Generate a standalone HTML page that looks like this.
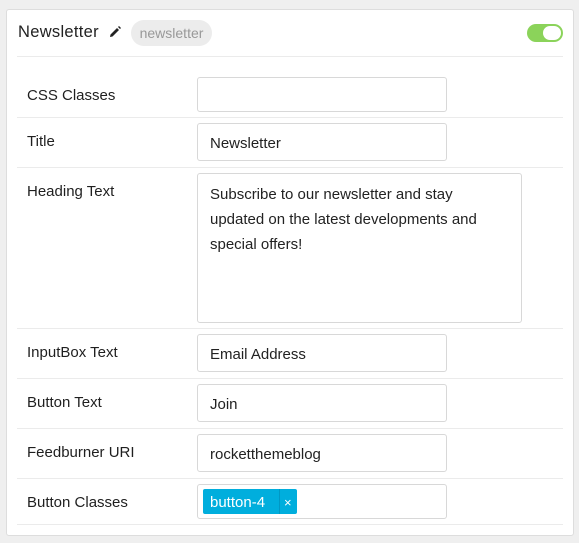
<!DOCTYPE html><html><head><style>
body{margin:0;background:#efefef;font-family:"Liberation Sans",sans-serif;color:#222;width:579px;height:543px;overflow:hidden;position:relative}
.panel{position:absolute;left:6px;top:9px;width:566px;height:525px;background:#fff;border:1px solid #ddd;border-radius:3px}
.a{position:absolute}
.line{position:absolute;left:17px;width:546px;height:1px;background:#ebebeb}
.lbl{position:absolute;left:27px;font-size:15px;color:#1f1f1f}
.in{position:absolute;left:197px;width:250px;border:1px solid #d8d8d8;border-radius:3px;background:#fff;box-sizing:border-box;font-size:15px;padding-left:12px}
</style></head><body>
<div class="panel"></div>
<div class="a" style="left:18px;top:23px;font-size:16.5px;letter-spacing:0.3px">Newsletter</div>
<svg class="a" style="left:109px;top:26px" width="12" height="12" viewBox="0 0 12 12"><path d="M1 11 L1.5 8.5 L8 2 L10 4 L3.5 10.5 Z M9 1 L10 0 L12 2 L11 3 Z" fill="#222"/></svg>
<div class="a" style="left:131px;top:20px;width:81px;height:26px;border-radius:13px;background:#ececec;color:#999;font-size:14px;line-height:26px;text-align:center">newsletter</div>
<div class="a" style="left:527px;top:24px;width:36px;height:18px;border-radius:9px;background:#8bd35a"></div>
<div class="a" style="left:542px;top:25px;width:18px;height:14px;border-radius:8px;background:#fff;border:1px solid #8bd35a"></div>
<div class="line" style="top:56px"></div>
<div class="line" style="top:117px"></div>
<div class="line" style="top:167px"></div>
<div class="line" style="top:328px"></div>
<div class="line" style="top:378px"></div>
<div class="line" style="top:428px"></div>
<div class="line" style="top:478px"></div>
<div class="line" style="top:524px"></div>
<div class="lbl" style="top:87px">CSS Classes</div>
<div class="lbl" style="top:133px">Title</div>
<div class="lbl" style="top:183px">Heading Text</div>
<div class="lbl" style="top:344px">InputBox Text</div>
<div class="lbl" style="top:394px">Button Text</div>
<div class="lbl" style="top:444px">Feedburner URI</div>
<div class="lbl" style="top:494px">Button Classes</div>
<div class="in" style="top:77px;height:35px"></div>
<div class="in" style="top:123px;height:38px;line-height:40px">Newsletter</div>
<div class="in" style="top:173px;height:150px;width:325px;padding-top:8px;line-height:25px;padding-right:10px">Subscribe to our newsletter and stay updated on the latest developments and special offers!</div>
<div class="in" style="top:334px;height:38px;line-height:40px">Email Address</div>
<div class="in" style="top:384px;height:38px;line-height:40px">Join</div>
<div class="in" style="top:434px;height:38px;line-height:40px">rocketthemeblog</div>
<div class="in" style="top:484px;height:35px"></div>
<div class="a" style="left:203px;top:489px;width:94px;height:25px;background:#00aedd;border-radius:2px;color:#fff;font-size:15px;line-height:27px">
<span style="padding-left:7px">button-4</span><span class="a" style="left:76px;top:0;width:1px;height:25px;background:#0098c4"></span><span class="a" style="left:81px;top:0;font-size:13px">×</span></div>
</body></html>
